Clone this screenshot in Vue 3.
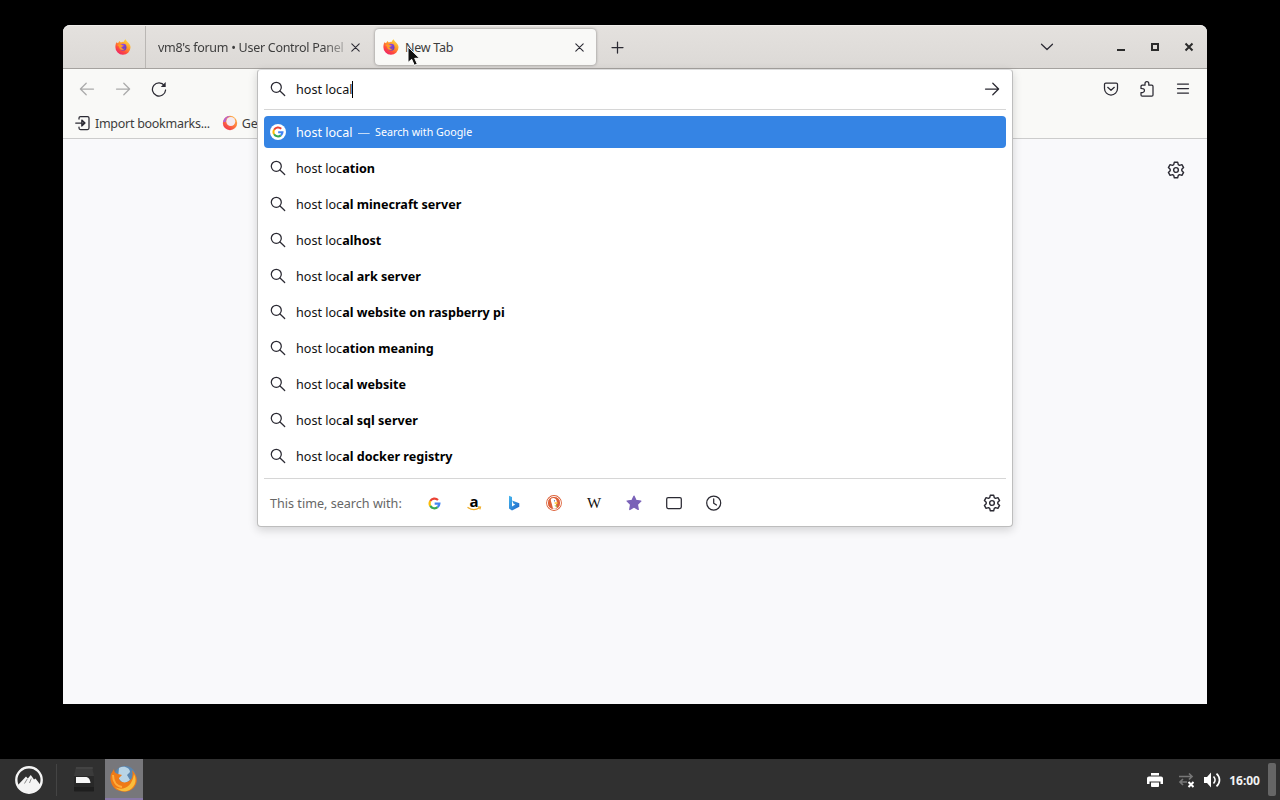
<script setup>
import { computed, ref } from "vue";

const query = ref("host local");
const typed = "host loc";

// suggestions, only the part after the typed text
const suggestions = ref([
  "ation",
  "al minecraft server",
  "alhost",
  "al ark server",
  "al website on raspberry pi",
  "ation meaning",
  "al website",
  "al sql server",
  "al docker registry",
]);

// one-off search engines
const engines = ["google", "amazon", "bing", "duck", "wikipedia", "star", "tabs", "clock"];

// gear outline, six teeth
const gear = computed(() => {
  const pts = [];
  for (let i = 0; i < 6; i++) {
    for (const [r, a] of [[5.2, -23], [7.1, -12], [7.1, 12], [5.2, 23]]) {
      const t = ((i * 60 - 90 + a) * Math.PI) / 180;
      pts.push(`${(8 + r * Math.cos(t)).toFixed(2)} ${(8 + r * Math.sin(t)).toFixed(2)}`);
    }
  }
  return "M" + pts.join("L") + "Z";
});
</script>

<template>
  <div class="desktop">
    <!-- shared icons -->
    <svg class="sprite" width="0" height="0">
      <defs>
        <linearGradient id="ffFire" x1="0.85" y1="0" x2="0.2" y2="1">
          <stop offset="0" stop-color="#ffe34a" />
          <stop offset="0.4" stop-color="#ff9a2a" />
          <stop offset="0.7" stop-color="#ff4a3d" />
          <stop offset="1" stop-color="#e81f72" />
        </linearGradient>
        <linearGradient id="ffGlobe" x1="0" y1="0" x2="1" y2="1">
          <stop offset="0" stop-color="#a54bea" />
          <stop offset="1" stop-color="#5b3bb8" />
        </linearGradient>
        <linearGradient id="startRing" x1="0.9" y1="0" x2="0.2" y2="1">
          <stop offset="0" stop-color="#ffc04a" />
          <stop offset="0.5" stop-color="#ff7a3d" />
          <stop offset="1" stop-color="#f0304f" />
        </linearGradient>
        <linearGradient id="bingBlue" x1="0" y1="0" x2="1" y2="1">
          <stop offset="0" stop-color="#45b6ee" />
          <stop offset="1" stop-color="#1b64c8" />
        </linearGradient>
        <symbol id="firefox" viewBox="0 0 16 16">
          <path d="M1.5 3.2 3 4.3 4.4 2l1.4 1.5C7 2.7 8 2.6 9 2.8 9.1 1.7 9.8.8 10.8.3c.1 1.2 1 2 2 2.9 1.8 1.500 2.800 3.300 2.700 5.300A7.600 7.600 0 0 1 8 15.800 7.500 7.500 0 0 1 .4 8.200c0-2 .3-3.600 1.100-5z" fill="url(#ffFire)" />
          <circle cx="8.1" cy="8.2" r="3.4" fill="url(#ffGlobe)" />
          <path d="M2 6.1c1.800-1 3.800-1 5.300.1l1.500.2c-.2 1-1.600 1.200-2.500 1.700.3 1.700 2 2.300 3.500 1.400-1 2.100-4.800 2-5.500-.7C4 7.700 3.400 6.500 2 6.100z" fill="#ff9d24" />
        </symbol>
        <symbol id="search" viewBox="0 0 16 16">
          <circle cx="6.300" cy="6.300" r="5" />
          <path d="m10 10 4.700 4.500" />
        </symbol>
        <symbol id="gear" viewBox="0 0 16 16">
          <path :d="gear" />
          <circle cx="8" cy="8" r="2.1" />
        </symbol>
        <symbol id="google" viewBox="0 0 16 16">
          <path d="M12.3 3.7A6 6 0 0 0 2.8 5" stroke="#ea4335" />
          <path d="M2.8 5a6 6 0 0 0 0 6" stroke="#fbbc05" />
          <path d="M2.8 11a6 6 0 0 0 9 1.5" stroke="#34a853" />
          <path d="M11.8 12.5A6 6 0 0 0 14 8.2H8.2" stroke="#4285f4" />
        </symbol>
      </defs>
    </svg>

    <!-- browser window -->
    <main class="window">
      <header class="titlebar">
        <div class="pinned">
          <svg class="fx" width="16" height="16"><use href="#firefox" /></svg>
        </div>
        <div class="tab">
          <span class="tab-label fade">vm8's forum • User Control Panel</span>
          <svg class="line thin" width="9" height="9" viewBox="0 0 9 9"><path d="m.8.8 7.400 7.400M8.200.8.800 8.200" /></svg>
        </div>
        <div class="tab active">
          <svg class="fx" width="16" height="16"><use href="#firefox" /></svg>
          <span class="tab-label">New Tab</span>
          <svg class="line thin" width="9" height="9" viewBox="0 0 9 9"><path d="m.8.8 7.400 7.400M8.200.8.800 8.200" /></svg>
        </div>
        <svg class="line plus" width="13" height="13" viewBox="0 0 13 13"><path d="M6.5 1v11M1 6.500h11" /></svg>
        <div class="controls">
          <svg class="line chevron" width="14" height="8" viewBox="0 0 14 8"><path d="m1.500 1.200 5.500 5.300 5.500-5.300" /></svg>
          <svg width="10" height="10" viewBox="0 0 10 10"><path d="M1 8h8" stroke="#2b2b2b" stroke-width="2" /></svg>
          <svg width="10" height="10" viewBox="0 0 10 10"><path d="M2 2h6v6H2z" fill="none" stroke="#2b2b2b" stroke-width="2" /></svg>
          <svg width="10" height="10" viewBox="0 0 10 10"><path d="m1.500 1.500 7 7m0-7-7 7" stroke="#2b2b2b" stroke-width="2" /></svg>
        </div>
      </header>

      <nav class="toolbar">
        <div class="nav-row">
          <svg class="line dim" width="16" height="16" viewBox="0 0 16 16"><path d="M14.500 8H1.500M7.200 2.200 1.400 8l5.800 5.800" /></svg>
          <svg class="line dim" width="16" height="16" viewBox="0 0 16 16"><path d="M1.500 8h13M8.800 2.200 14.600 8l-5.800 5.800" /></svg>
          <svg class="line" width="16" height="16" viewBox="0 0 16 16"><path d="M13.400 4.600A6.600 6.600 0 1 0 14.600 9" /><path d="M14.700 1v5H9.800z" fill="#2b2a33" stroke="none" /></svg>
          <div class="nav-right">
            <svg class="line" width="16" height="16" viewBox="0 0 16 16"><path d="M2.800 2h10.400c.8 0 1.300.5 1.300 1.300v4.200a6.500 6.500 0 0 1-13 0V3.300C1.500 2.500 2 2 2.800 2z" /><path d="m4.700 6.300 3.300 3 3.300-3" /></svg>
            <svg class="line puzzle" width="16" height="16" viewBox="0 0 16 16"><path d="M2 7.500V5.300c0-.7.500-1.100 1.200-1.100H6V2.600a1.900 1.900 0 0 1 3.800 0v1.600h3c.7 0 1.200.5 1.200 1.200v8.600c0 .7-.5 1.200-1.200 1.200H3.200c-.7 0-1.200-.5-1.200-1.200v-2.500h1.500a1.900 1.900 0 0 0 0-3.900z" /></svg>
            <svg class="line" width="16" height="16" viewBox="0 0 16 16"><path d="M2.500 3h11M2.500 7.500h11M2.500 12h11" /></svg>
          </div>
        </div>
        <div class="bookmarks">
          <svg class="line" width="16" height="16" viewBox="0 0 16 16"><path d="M4 4V3c0-.9.600-1.500 1.500-1.500h7c.9 0 1.500.6 1.500 1.500v10c0 .9-.6 1.500-1.500 1.500h-7c-.9 0-1.500-.6-1.500-1.500v-1M.7 8h8.500M6.800 5 10 8l-3.200 3z" /></svg>
          <span>Import bookmarks...</span>
          <svg class="started" width="16" height="16" viewBox="0 0 16 16">
            <circle cx="8" cy="8" r="7.200" fill="url(#startRing)" />
            <path d="M1 7a7 7 0 0 1 8-6C5 2 4 4 3.600 7z" fill="#b65fd6" />
            <circle cx="8.800" cy="6.500" r="4.500" fill="#f3eaf2" />
          </svg>
          <span>Ge</span>
        </div>
      </nav>

      <section class="page">
        <svg class="line" width="18" height="18"><use href="#gear" /></svg>
      </section>

      <!-- address bar with suggestions -->
      <div class="urlbar">
        <div class="input-row">
          <svg class="line" width="16" height="16"><use href="#search" /></svg>
          <span class="query">{{ query }}</span>
          <svg class="line go" width="16" height="16" viewBox="0 0 16 16"><path d="M1.500 8h13M8.800 2.200 14.600 8l-5.800 5.800" /></svg>
        </div>
        <ul class="results">
          <li class="selected">
            <span class="badge"><svg class="g" width="12" height="12"><use href="#google" /></svg></span>
            <span>{{ query }}</span>
            <span class="dash">—</span>
            <small>Search with Google</small>
          </li>
          <li v-for="s in suggestions" :key="s">
            <svg class="line" width="16" height="16"><use href="#search" /></svg>
            <span>{{ typed }}<b>{{ s }}</b></span>
          </li>
        </ul>
        <div class="oneoffs">
          <span class="oneoff-label">This time, search with:</span>
          <div v-for="e in engines" :key="e" class="engine">
            <svg v-if="e === 'google'" class="g" width="13" height="13"><use href="#google" /></svg>
            <span v-else-if="e === 'amazon'" class="amazon">
              a
              <svg width="16" height="5" viewBox="0 0 16 5"><path d="M1.500 1.200c4 3 8.500 3 12 .5M12 .8l2.500.3-.6 2.200" fill="none" stroke="#f0ad28" stroke-width="1.200" /></svg>
            </span>
            <svg v-else-if="e === 'bing'" width="16" height="16" viewBox="0 0 16 16"><path d="m3 .8 3 1.100v9.600l3.200-2-1.900-.9-1.200-3 7.200 2.700v3.500L6 15.500l-3-1.900z" fill="url(#bingBlue)" /></svg>
            <svg v-else-if="e === 'duck'" width="16" height="16" viewBox="0 0 16 16">
              <circle cx="8" cy="8" r="7.900" fill="#dc6038" />
              <circle cx="8" cy="8" r="6.600" fill="none" stroke="#fff" stroke-width=".9" />
              <path d="M5 3.800c1.700-1.500 5-1 5.500 1.700l.6 3-1.300 1.200 1 3.400c-1.300.8-2.600.8-3.800.4L5.700 8.500C5 6.500 4.500 5 5 3.800z" fill="#fff" />
              <path d="M8.600 7.300h3v1.500h-3z" fill="#fdc32c" />
              <path d="M8.300 10.800 10.800 10v2.200z" fill="#9bbd47" />
              <circle cx="8.500" cy="5.800" r=".6" fill="#2d4f8e" />
            </svg>
            <span v-else-if="e === 'wikipedia'" class="wiki">W</span>
            <svg v-else-if="e === 'star'" width="16" height="16" viewBox="0 0 16 16"><path d="m8 1.200 2 4.300 4.800.6-3.500 3.300.9 5L8 12l-4.200 2.400.9-5L1.200 6.100 6 5.500z" fill="#7a62b8" stroke="#7a62b8" stroke-width="1.400" stroke-linejoin="round" /></svg>
            <svg v-else-if="e === 'tabs'" class="line" width="16" height="16" viewBox="0 0 16 16"><rect x=".7" y="2.700" width="14.600" height="10.800" rx="1.400" /></svg>
            <svg v-else class="line" width="16" height="16" viewBox="0 0 16 16"><circle cx="7.700" cy="8" r="7" /><path d="M7.700 3.800v4.400l2.800 1.800" /></svg>
          </div>
          <svg class="line settings" width="18" height="18"><use href="#gear" /></svg>
        </div>
      </div>

      <svg class="cursor" width="16" height="22" viewBox="0 0 16 22"><path d="M1 1v15.500l3.700-3.200 2.600 6 3-1.300-2.600-5.700h4.900z" fill="#111" stroke="#fff" stroke-width="1" /></svg>
    </main>

    <!-- taskbar -->
    <footer class="taskbar">
      <div class="menu">
        <svg width="28" height="28" viewBox="0 0 28 28">
          <circle cx="14" cy="14" r="12.700" fill="#303030" stroke="#f4f4f4" stroke-width="2.400" />
          <path d="m2.500 19.500 8.500-9 1.800 2 3-3.500 3.200 4.500 1.500-1 5 6.500A13 13 0 0 1 2.500 19.500z" fill="#f4f4f4" />
          <path d="m9.500 17.500 2.700-4.500M14.500 17l1.800-4.500" stroke="#888" stroke-width="1" />
        </svg>
      </div>
      <div class="task">
        <svg width="22" height="28" viewBox="0 0 22 28">
          <path d="M3 1h16l2 9H1z" fill="#3b3b3b" />
          <path d="M1 20h20v4.500c0 .5-.5 1-1 1H2c-.5 0-1-.5-1-1z" fill="#1e1e1e" />
          <path d="M1 10h20v11H1z" fill="#282828" />
          <path d="M3 17v-6h10.500c2.500.600 3.700 3 4 6z" fill="#f7f7f7" />
          <path d="M3 2h17" stroke="#4c4c4c" />
        </svg>
      </div>
      <div class="task current">
        <svg width="28" height="28" viewBox="0 0 28 28">
          <circle cx="15" cy="12" r="11" fill="#5a86b0" />
          <path d="M9 3c5-3 11 0 11 4l-3 3 3 5-6 4-6-6z" fill="#b8d4e6" />
          <path d="M4 4c0 3 1 4 4 5l4 1-3 3c0 4 6 6 10 3 4-2 4-7 3-11 4 4 6 9 4 14-3 7-10 9-16 7C2 24-1 15 1 9z" fill="#ee7a17" />
          <path d="M24 9c4 7 0 15-7 17-5 1-9-1-12-4 7 4 17 1 19-13z" fill="#f9bd3c" />
          <path d="M3 10c0 6 3 11 9 12" fill="none" stroke="#ffac3b" stroke-width="2" />
        </svg>
      </div>
      <div class="tray">
        <svg width="16" height="14" viewBox="0 0 16 14"><path d="M4 0h8v2.500H4zM2 3.500h12c1.200 0 2 .8 2 2V11h-2.500V8.500h-11V11H0V5.500c0-1.200.8-2 2-2z" fill="#fff" /><path d="M4 9.500h8V13c0 .5-.5 1-1 1H5c-.5 0-1-.5-1-1z" fill="#fff" /></svg>
        <svg class="network" width="16" height="16" viewBox="0 0 16 16"><path d="M1 4.500h13M11 1.500l3 3-3 3M9 10H2M5 7l-3 3 3 3" fill="none" stroke="#777" stroke-width="1.700" /><path d="m10.500 10 5 5m0-5-5 5" stroke="#fff" stroke-width="2" /></svg>
        <svg class="volume" width="17" height="16" viewBox="0 0 17 16"><path d="M0 5h3l4-4.500v15L3 11H0z" fill="#fff" /><path d="M9.500 4.500c2 2 2 5 0 7M12.500 1.700c4 3.600 4 9 0 12.600" fill="none" stroke="#fff" stroke-width="1.700" /></svg>
        <span class="clock">16:00</span>
        <span class="show-desktop"></span>
      </div>
    </footer>
  </div>
</template>

<style>
body {
  margin: 0;
  background: #000;
}
</style>

<style scoped>
.desktop {
  display: flex;
  flex-direction: column;
  justify-content: space-between;
  box-sizing: border-box;
  width: 1280px;
  height: 800px;
  padding-top: 25px;
  overflow: hidden;
  background: #000;
  color: #15141a;
  font-family: "Noto Sans", sans-serif;
  font-size: 12.6px;
}
.desktop svg {
  display: block;
  flex: none;
}
.desktop .sprite {
  position: absolute;
}
.line {
  fill: none;
  stroke: #2b2a33;
  stroke-width: 1.25;
  stroke-linecap: round;
  stroke-linejoin: round;
}
.thin {
  stroke-width: 1.1;
}
.dim {
  stroke: #aaa;
}
.g {
  fill: none;
  stroke-width: 2.7;
}
.window {
  position: relative;
  display: flex;
  flex-direction: column;
  width: 1144px;
  height: 679px;
  margin-left: 63px;
  background: #f9f9fb;
  border-radius: 7px 7px 0 0;
}
.titlebar {
  display: flex;
  align-items: center;
  box-sizing: border-box;
  height: 44px;
  background: linear-gradient(#e4e1de, #dcd9d6);
  border-top: 1px solid #efedeb;
  border-bottom: 1px solid #a5a29f;
  border-radius: 7px 7px 0 0;
  color: #3d3d3d;
}
.pinned {
  display: flex;
  align-items: center;
  box-sizing: border-box;
  width: 83px;
  height: 42px;
  padding-left: 52px;
  border-right: 1px solid #bab7b4;
}
.tab {
  display: flex;
  align-items: center;
  box-sizing: border-box;
  width: 229px;
  height: 36px;
  padding: 0 15px 0 12px;
}
.tab-label {
  flex: 1;
  font-size: 12.5px;
  letter-spacing: -0.28px;
  white-space: nowrap;
}
.fade {
  margin-right: 5px;
  mask-image: linear-gradient(to right, #000 165px, rgba(0, 0, 0, 0.25) 188px);
}
.active {
  width: 221px;
  padding: 0 12px 0 8px;
  background: #f9f9f7;
  border-radius: 4px;
  box-shadow: 0 0 3px rgba(0, 0, 0, 0.4);
}
.active .fx {
  margin-right: 6px;
}
.plus {
  margin-left: 15px;
}
.controls {
  display: flex;
  align-items: center;
  gap: 24px;
  margin-left: auto;
  padding-right: 13px;
}
.chevron {
  margin-right: 38px;
}
.toolbar {
  height: 69px;
  background: #f9f9f7;
  border-bottom: 1px solid #ccc;
  color: #3d3d3d;
}
.nav-row {
  display: flex;
  align-items: center;
  gap: 20px;
  height: 40px;
  padding: 0 16px;
}
.nav-right {
  display: flex;
  gap: 20px;
  margin-left: auto;
}
.bookmarks {
  display: flex;
  align-items: center;
  height: 28px;
  padding-left: 12px;
  font-size: 12.5px;
  letter-spacing: -0.28px;
}
.bookmarks span {
  margin-left: 4px;
}
.started {
  margin-left: 12px;
}
.page {
  display: flex;
  justify-content: flex-end;
  padding: 22px 22px 0 0;
}
.urlbar {
  position: absolute;
  top: 44px;
  left: 194px;
  box-sizing: border-box;
  width: 756px;
  height: 458px;
  padding: 0 6px;
  background: #fff;
  border: 1px solid #bdbdbd;
  border-top-color: #ddd;
  border-radius: 4px;
  box-shadow: 0 3px 10px rgba(0, 0, 0, 0.16);
  color: #111;
}
.input-row {
  display: flex;
  align-items: center;
  box-sizing: border-box;
  height: 40px;
  padding: 0 6px 1px;
  border-bottom: 1px solid #d6d6d6;
}
.query {
  margin-left: 10px;
  border-right: 1px solid #000;
}
.go {
  margin-left: auto;
}
.results {
  margin: 0;
  padding: 6px 0;
  list-style: none;
}
.results li {
  display: flex;
  align-items: center;
  height: 32px;
  margin-bottom: 4px;
  padding-left: 6px;
}
.results li:last-child {
  margin-bottom: 0;
}
.results li > span:nth-child(2) {
  margin-left: 10px;
}
.results b {
  color: #000;
  font-weight: 700;
}
.results .selected {
  background: #3584e4;
  border-radius: 4px;
  color: #fff;
}
.badge {
  display: flex;
  align-items: center;
  justify-content: center;
  width: 16px;
  height: 16px;
  background: #fff;
  border-radius: 50%;
}
.dash {
  margin: 0 5px;
  opacity: 0.7;
}
.results small {
  font-size: 10.7px;
}
.oneoffs {
  display: flex;
  align-items: center;
  height: 48px;
  padding: 0 6px;
  border-top: 1px solid #d6d6d6;
}
.oneoff-label {
  width: 144px;
  color: #666;
}
.engine {
  display: flex;
  align-items: center;
  justify-content: center;
  width: 40px;
  height: 32px;
}
.amazon {
  width: 16px;
  color: #000;
  font: bold 15px/10px "Open Sans", sans-serif;
  text-align: center;
}
.wiki {
  font: 15px/16px "Liberation Serif", serif;
}
.settings {
  margin-left: auto;
  margin-right: -1px;
}
.cursor {
  position: absolute;
  top: 21px;
  left: 344px;
}
.taskbar {
  display: flex;
  align-items: center;
  height: 41px;
  background: #303030;
}
.menu {
  display: flex;
  align-items: center;
  box-sizing: border-box;
  width: 57px;
  height: 32px;
  padding-left: 15px;
  border-right: 1px solid #444;
}
.task {
  display: flex;
  align-items: center;
  justify-content: center;
  box-sizing: border-box;
  width: 38px;
  height: 41px;
  margin-left: 8px;
}
.current {
  margin-left: 2px;
  background: #77777b;
  border-bottom: 2px solid #8878a8;
}
.tray {
  display: flex;
  align-items: center;
  margin-left: auto;
  padding-right: 4px;
}
.network {
  margin-left: 15px;
}
.volume {
  margin-left: 10px;
}
.clock {
  margin: 1px 8px 0;
  color: #f2f2f2;
  font-size: 12px;
  font-weight: 700;
}
.show-desktop {
  width: 8px;
  height: 33px;
  background: #666;
  border-radius: 2px;
}
</style>
